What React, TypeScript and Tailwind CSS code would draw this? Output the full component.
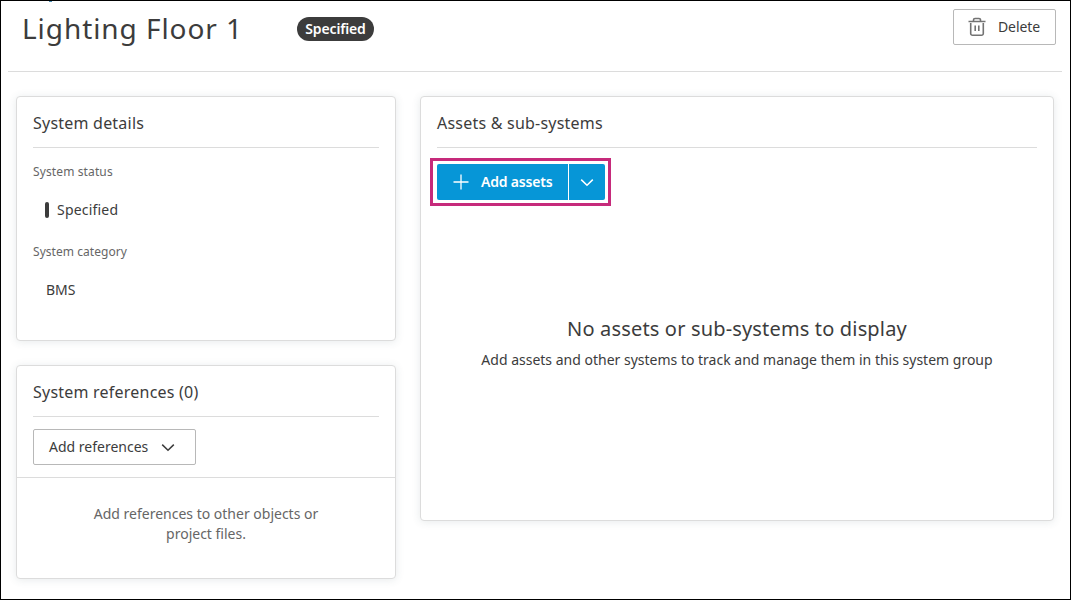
import React from 'react'

interface CardProps {
  title: string
  className?: string
  children: React.ReactNode
}

export default function App(): React.ReactElement {
  return (
    <div className="relative w-[1071px] h-[600px] overflow-hidden border border-black bg-white text-[#3c3c3c] text-[14px] leading-5 font-['Noto_Sans',sans-serif]">
      {/* Descender of the scrolled-away breadcrumb */}
      <span className="absolute left-12 top-0 w-[3px] h-px bg-[#4a8fb5]" />

      {/* Header */}
      <header className="flex items-start justify-between ml-[7px] mr-2 h-[71px] pl-[14px] pr-[6px] border-b border-[#dcdcdc]">
        <div className="flex items-start pt-2">
          <h1 className="w-[275px] text-[28px] leading-[38px] whitespace-nowrap tracking-[0.93px]">
            Lighting Floor 1
          </h1>
          <span className="flex items-center justify-center mt-2 w-[77px] h-6 rounded-full bg-[#3c3c3c] text-white font-semibold tracking-[-0.15px]">
            Specified
          </span>
        </div>
        <button className="flex items-center mt-2 w-[103px] h-9 pl-[14px] border border-[#b8b8b8] rounded-xs">
          <TrashIcon />
          <span className="ml-3 tracking-[-0.1px]">Delete</span>
        </button>
      </header>

      <main className="flex items-start gap-6 px-[15px] pt-6">
        <div className="flex flex-col gap-6 w-[380px]">
          <Card title="System details" className="h-[245px]">
            <div className="px-4 pt-[14px]">
              <p className="text-xs leading-5 tracking-[0.12px] text-[#666666]">System status</p>
              <div className="flex items-center mt-[18px] pl-3 tracking-[0.2px]">
                <span className="w-1 h-4 mr-2 rounded-xs bg-[#3c3c3c]" />
                Specified
              </div>
              <p className="mt-[22px] text-xs leading-5 tracking-[0.05px] text-[#666666]">System category</p>
              <p className="mt-[18px] pl-[13px]">BMS</p>
            </div>
          </Card>

          <Card title="System references (0)" className="h-[214px]">
            <div className="px-4 py-3 border-b border-[#dcdcdc]">
              <button className="flex items-center w-[163px] h-9 pl-[15px] border border-[#b8b8b8] rounded-xs">
                Add references
                <ChevronIcon className="ml-[13px]" />
              </button>
            </div>
            <p className="pt-[26px] px-16 text-center text-[#666666]">
              Add references to other objects or project files.
            </p>
          </Card>
        </div>

        <Card title="Assets & sub-systems" className="w-[634px] h-[425px]">
          {/* Split button with highlight frame */}
          <div className="flex w-[181px] h-12 ml-[9px] mt-[10px] p-[3px] border-3 border-[#c62a7b]">
            <div className="flex flex-1 ml-px rounded-xs overflow-hidden text-white font-semibold">
              <button className="flex items-center w-[131px] pl-4 bg-[#0696d7]">
                <svg viewBox="0 0 16 16" className="w-4 h-4" fill="none" stroke="currentColor" strokeWidth="1.3">
                  <path d="M8 .5v15M.5 8h15" />
                </svg>
                <span className="ml-3 tracking-[-0.2px]">Add assets</span>
              </button>
              <button className="flex flex-1 items-center justify-center ml-px bg-[#0696d7]">
                <ChevronIcon />
              </button>
            </div>
          </div>

          {/* Empty state */}
          <div className="pt-[109px] text-center">
            <h3 className="text-[20px] leading-7 tracking-[0.16px]">No assets or sub-systems to display</h3>
            <p className="mt-[7px]">Add assets and other systems to track and manage them in this system group</p>
          </div>
        </Card>
      </main>
    </div>
  )
}

function Card({ title, className = '', children }: CardProps): React.ReactElement {
  return (
    <section className={`border border-[#dcdcdc] rounded-sm bg-white shadow-[0_1px_8px_rgba(60,80,90,0.12)] ${className}`}>
      <h2 className="mx-4 h-[51px] pt-[14px] border-b border-[#dcdcdc] text-[16px] leading-6 tracking-[0.22px]">{title}</h2>
      {children}
    </section>
  )
}

function ChevronIcon({ className = '' }: { className?: string }): React.ReactElement {
  return (
    <svg viewBox="0 0 14 14" className={`w-3.5 h-3.5 ${className}`} fill="none" stroke="currentColor" strokeWidth="1.5">
      <path d="M1.2 4.6 7 10.2l5.8-5.6" />
    </svg>
  )
}

function TrashIcon(): React.ReactElement {
  return (
    <svg viewBox="0 0 18 20" className="w-[18px] h-5 text-[#737373]" fill="none" stroke="currentColor" strokeWidth="1.6">
      <path d="M.5 4.5h17M5.5 4.2V3A1.5 1.5 0 0 1 7 1.5h4A1.5 1.5 0 0 1 12.5 3v1.2M2.7 6v10.5a1.8 1.8 0 0 0 1.8 1.8h9a1.8 1.8 0 0 0 1.8-1.8V6M7.2 8.5V14M10.8 8.5V14" />
    </svg>
  )
}
